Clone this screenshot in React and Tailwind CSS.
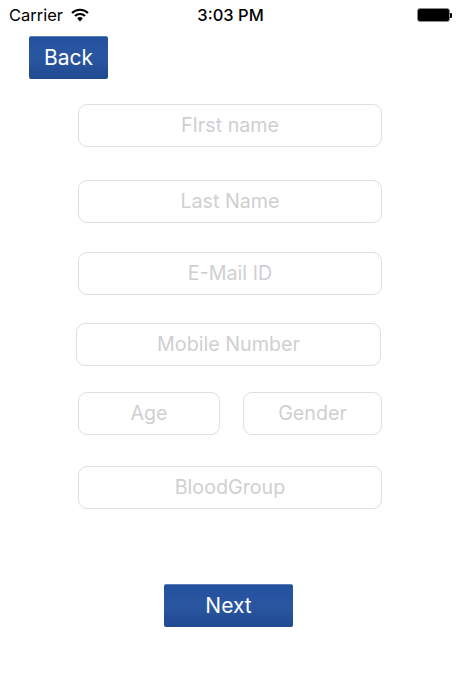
const field = 'h-[43px] pb-[2px] rounded-[9px] border border-[#dfdfdf] bg-white text-center text-[19.7px] font-["Inter",sans-serif] placeholder:text-[#cfcfd2] focus:outline-none';
const blueBtn = 'flex items-center justify-center rounded-[2px] bg-gradient-to-b from-[#24519f] via-[#2a56a1] to-[#204a90] text-white text-[21px] font-["Inter",sans-serif] border-t border-[#5a7db5]';

function Wifi() {
	return (
		<svg width="18" height="14" viewBox="0 0 18 14" className="ml-[8px]">
			<path d="M1 5 A11.5 11.5 0 0 1 17 5" fill="none" stroke="#000" strokeWidth="2.2" />
			<path d="M4 8 A7.2 7.2 0 0 1 14 8" fill="none" stroke="#000" strokeWidth="2.2" />
			<path d="M6.2 10.3 A4 4 0 0 1 11.8 10.3 L9 13.4 Z" fill="#000" />
		</svg>
	);
}

function Battery() {
	return (
		<div className="flex items-center">
			<div className="w-[33px] h-[14px] rounded-[3px] border-[1.5px] border-[#8a8a8a] bg-black" />
			<div className="w-[2px] h-[5px] bg-black rounded-r-[1px]" />
		</div>
	);
}

export default function App() {
	return (
		<div className="w-[460px] h-[690px] bg-white overflow-hidden font-['Inter',sans-serif]">
			{/* Status bar */}
			<div className="h-[30px] pl-[9px] pr-[8px] flex items-center justify-between text-black text-[16.5px]">
				<div className="flex items-center w-[130px]">
					<span>Carrier</span>
					<Wifi />
				</div>
				<span className="font-medium">3:03 PM</span>
				<div className="w-[130px] flex justify-end">
					<Battery />
				</div>
			</div>

			<div className="pl-[29px] pt-[6px]">
				<div className={`${blueBtn} w-[79px] h-[43px]`}>Back</div>
			</div>

			{/* Form */}
			<div className="pl-[78px] flex flex-col pt-[25px]">
				<input readOnly placeholder="FIrst name" className={`${field} w-[304px]`} />
				<input readOnly placeholder="Last Name" className={`${field} w-[304px] mt-[33px]`} />
				<input readOnly placeholder="E-Mail ID" className={`${field} w-[304px] mt-[29px]`} />
				<input readOnly placeholder="Mobile Number" className={`${field} w-[305px] mt-[28px] -ml-[2px]`} />
				<div className="flex justify-between w-[304px] mt-[26px]">
					<input readOnly placeholder="Age" className={`${field} w-[142px]`} />
					<input readOnly placeholder="Gender" className={`${field} w-[139px]`} />
				</div>
				<input readOnly placeholder="BloodGroup" className={`${field} w-[304px] mt-[31px]`} />
			</div>

			<div className="pl-[164px] pt-[75px]">
				<div className={`${blueBtn} w-[129px] h-[43px] pb-[1px]`}>Next</div>
			</div>
		</div>
	);
}
